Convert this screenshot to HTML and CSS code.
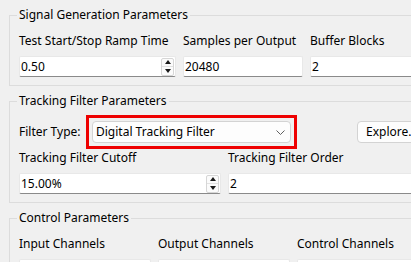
FILE: index.html
```html
<!DOCTYPE html>
<html>
<head>
  <meta name="viewport" content="width=device-width, initial-scale=1">
  <link rel="stylesheet" href="styles.css">
</head>
<body>

  <div class="panel">
    <!-- Signal generation -->
    <fieldset class="group">
      <legend>Signal Generation Parameters</legend>
      <div class="fields signal-cols">
        <div class="field">
          <label>Test Start/Stop Ramp Time</label>
          <div class="edit spin">
            <input type="text" value="0.50">
            <div class="spin-buttons">
              <span class="spin-up"></span>
              <span class="spin-down"></span>
            </div>
          </div>
        </div>
        <div class="field">
          <label>Samples per Output</label>
          <div class="edit"><input type="text" value="20480"></div>
        </div>
        <div class="field">
          <label>Buffer Blocks</label>
          <div class="edit"><input type="text" value="2"></div>
        </div>
      </div>
    </fieldset>

    <!-- Tracking filter -->
    <fieldset class="group">
      <legend>Tracking Filter Parameters</legend>
      <div class="filter-row">
        <label>Filter Type:</label>
        <div class="combo highlight">
          <span>Digital Tracking Filter</span>
          <svg width="9" height="5" viewBox="0 0 9 5"><path d="M0.5 0.5 L4.5 4.5 L8.5 0.5" fill="none" stroke="#5f5f5f" stroke-width="1"/></svg>
        </div>
        <button class="push">Explore...</button>
      </div>
      <div class="fields tracking-cols">
        <div class="field">
          <label>Tracking Filter Cutoff</label>
          <div class="edit spin">
            <input type="text" value="15.00%">
            <div class="spin-buttons">
              <span class="spin-up"></span>
              <span class="spin-down"></span>
            </div>
          </div>
        </div>
        <div class="field">
          <label>Tracking Filter Order</label>
          <div class="edit"><input type="text" value="2"></div>
        </div>
      </div>
    </fieldset>

    <!-- Control -->
    <fieldset class="group">
      <legend>Control Parameters</legend>
      <div class="fields control-cols">
        <div class="field">
          <label>Input Channels</label>
          <div class="edit"><input type="text" value=""></div>
        </div>
        <div class="field">
          <label>Output Channels</label>
          <div class="edit"><input type="text" value=""></div>
        </div>
        <div class="field">
          <label>Control Channels</label>
          <div class="edit"><input type="text" value=""></div>
        </div>
      </div>
    </fieldset>
  </div>

</body>
</html>
```

FILE: styles.css
```css
/* Base styling */
html, body {
  margin: 0;
  padding: 0;
  background: #f0f0f0;
  overflow: hidden;
}
body {
  font-family: "Noto Sans", "DejaVu Sans", sans-serif;
  font-size: 12px;
  line-height: 16px;
  color: #000;
}
.panel {
  width: 540px;
  padding-top: 7px;
}
/* Group boxes */
.group {
  margin: 0 0 7px 9px;
  padding: 10px 9px 8px 9px;
  border: 1px solid #dcdcdc;
  min-width: 0;
}
.group legend {
  padding: 0 2px;
  margin-left: -2px;
  line-height: 16px;
}
/* Label + edit columns */
.fields {
  display: grid;
  column-gap: 7px;
}
.signal-cols {
  grid-template-columns: 157px 120px 200px;
}
.tracking-cols {
  grid-template-columns: 202px 250px;
}
.control-cols {
  grid-template-columns: 132px 132px 200px;
}
.field {
  display: flex;
  flex-direction: column;
  gap: 7px;
  white-space: nowrap;
}
/* Line edits */
.edit {
  display: flex;
  align-items: center;
  height: 21px;
  box-sizing: border-box;
  background: #fff;
  border: 1px solid #e8e8e8;
  border-bottom-color: #8a8a8a;
  border-radius: 2px;
}
.edit input {
  flex: 1;
  min-width: 0;
  height: 100%;
  border: none;
  outline: none;
  background: transparent;
  font: inherit;
  color: #000;
  padding: 0 0 0 1px;
  margin: 0;
}
/* Spin box buttons */
.spin-buttons {
  display: flex;
  flex-direction: column;
  width: 13px;
  height: 18px;
  margin-right: 1px;
  border: 1px solid #d6d6d6;
  border-radius: 2px;
  background: #fbfbfb;
  box-sizing: border-box;
}
.spin-buttons span {
  flex: 1;
  display: flex;
  align-items: center;
  justify-content: center;
}
.spin-up {
  border-bottom: 1px solid #e2e2e2;
}
.spin-up::before {
  content: "";
  border-left: 3px solid transparent;
  border-right: 3px solid transparent;
  border-bottom: 4px solid #1a1a1a;
}
.spin-down::before {
  content: "";
  border-left: 3px solid transparent;
  border-right: 3px solid transparent;
  border-top: 4px solid #1a1a1a;
}
/* Filter type row */
.filter-row {
  display: flex;
  align-items: center;
  margin-top: 2px;
  margin-bottom: 7px;
  white-space: nowrap;
}
.filter-row label {
  width: 73px;
}
.combo {
  width: 199px;
  height: 22px;
  box-sizing: border-box;
  display: flex;
  align-items: center;
  justify-content: space-between;
  padding: 0 5px 0 3px;
  background: #fdfdfd;
  border: 1px solid #d3d3d3;
  border-radius: 4px;
}
.combo svg {
  display: block;
}
/* Red annotation frame drawn over the combo */
.highlight {
  position: relative;
}
.highlight::after {
  content: "";
  position: absolute;
  top: -7px;
  left: -7px;
  right: -7px;
  bottom: -7px;
  border: 3px solid #ee0000;
  pointer-events: none;
}
.push {
  margin-left: 66px;
  height: 22px;
  padding: 0 12px 0 8px;
  font: inherit;
  color: #000;
  background: #fdfdfd;
  border: 1px solid #d3d3d3;
  border-radius: 4px;
}
```
